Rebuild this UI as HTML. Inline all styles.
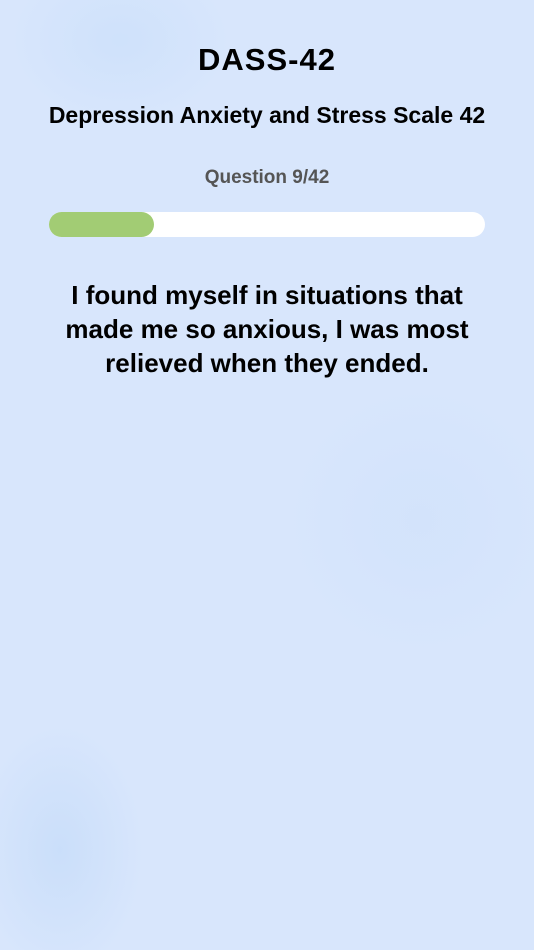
<!DOCTYPE html>
<html><head><meta charset="utf-8"><style>
html,body{margin:0;padding:0}
body{width:534px;height:950px;overflow:hidden;position:relative;font-family:"Liberation Sans","DejaVu Sans",sans-serif;
background:
radial-gradient(ellipse 120px 180px at 60px 850px,rgba(170,205,245,.3),transparent 70%),
radial-gradient(ellipse 160px 120px at 120px 40px,rgba(185,215,248,.3),transparent 70%),
radial-gradient(ellipse 200px 200px at 420px 520px,rgba(190,215,248,.2),transparent 70%),
#d8e6fc;}
.c{position:absolute;left:0;width:534px;text-align:center;font-weight:bold;color:#000}
</style></head><body>
<div class="c" style="top:42px;font-size:31px;letter-spacing:1px">DASS-42</div>
<div class="c" style="top:102px;font-size:23px">Depression Anxiety and Stress Scale 42</div>
<div class="c" style="top:167px;font-size:19px;color:#555">Question 9/42</div>
<div style="position:absolute;left:49px;top:212px;width:436px;height:25px;background:#fff;border-radius:13px"></div>
<div style="position:absolute;left:49px;top:212px;width:105px;height:25px;background:#a2cc74;border-radius:13px"></div>
<div class="c" style="top:278px;font-size:26px;line-height:34px;left:47px;width:440px">I found myself in situations that made me so anxious, I was most relieved when they ended.</div>
</body></html>
